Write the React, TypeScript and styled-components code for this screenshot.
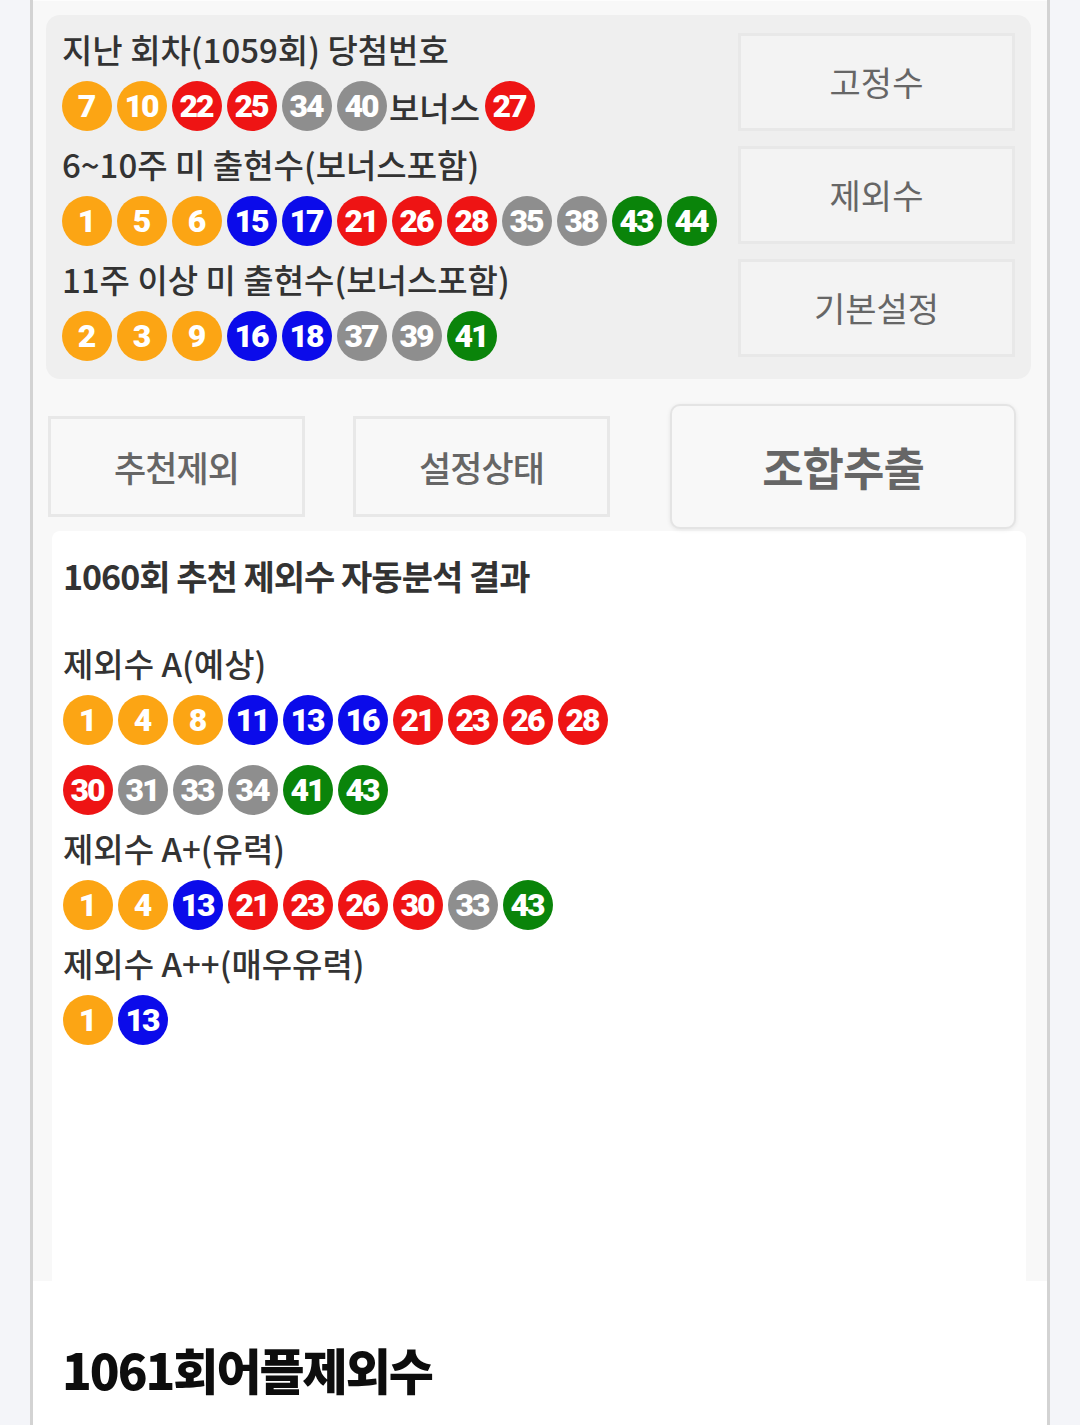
import React from 'react';
import styled, { createGlobalStyle } from 'styled-components';

const KR_FONT = `"Noto Sans CJK KR", "Noto Sans", sans-serif`;

const GlobalStyle = createGlobalStyle`
  body {
    margin: 0;
    background: #f4f5f9;
    font-family: ${KR_FONT};
  }
`;

const Page = styled.div`
  width: 1014px;
  min-height: 1425px;
  margin-left: 30px;
  border-left: 3px solid #d3d3d3;
  border-right: 3px solid #d3d3d3;
  background: #ffffff;
`;

const TopArea = styled.div`
  background: #f8f8f8;
  padding: 14px 16px 0 13px;
  border-top: 1px solid #fdfdfd;
`;

const Panel = styled.div`
  display: flex;
  justify-content: space-between;
  align-items: center;
  background: #efefef;
  border-radius: 14px;
  padding: 5px 16px 14px 16px;
`;

const InfoColumn = styled.div`
  display: flex;
  flex-direction: column;
`;

const Title = styled.div`
  font-size: 33px;
  font-weight: 500;
  line-height: 58px;
  color: #333;
`;

const BallRow = styled.div<{ $wrapWidth?: number }>`
  display: flex;
  flex-wrap: wrap;
  align-items: center;
  row-gap: 13px;
  max-width: ${(p) => (p.$wrapWidth ? `${p.$wrapWidth}px` : 'none')};
`;

const BALL_COLORS = ['#fca514', '#0b0bea', '#ee1414', '#8e8e8e', '#0a840a'];

const BallCircle = styled.span<{ $color: string }>`
  display: inline-flex;
  align-items: center;
  justify-content: center;
  width: 50px;
  height: 50px;
  margin: 3px 5px 4px 0;
  border-radius: 50%;
  background: ${(p) => p.$color};
  color: #fff;
  font-family: Roboto, "Liberation Sans", sans-serif;
  font-weight: 900;
  font-size: 32px;
  letter-spacing: -2px;
  text-indent: -2px;
`;

const BonusLabel = styled.span`
  font-size: 33px;
  font-weight: 500;
  color: #333;
  margin: 0 5px 0 -3px;
`;

const SideButtons = styled.div`
  display: flex;
  flex-direction: column;
  gap: 15px;
  padding-top: 4px;
`;

const SideButton = styled.button`
  width: 277px;
  height: 98px;
  background: #f3f3f3;
  border: 3px solid #e8e8e8;
  font-family: ${KR_FONT};
  font-size: 34px;
  color: #666;
  padding: 0;
`;

const ActionRow = styled.div`
  display: flex;
  align-items: center;
  padding: 25px 0 2px 2px;
`;

const ActionButton = styled.button<{ $big?: boolean; $gap: number }>`
  width: ${(p) => (p.$big ? 346 : 257)}px;
  height: ${(p) => (p.$big ? 125 : 101)}px;
  margin-left: ${(p) => p.$gap}px;
  background: #f8f8f8;
  border: ${(p) => (p.$big ? '2px solid #e4e4e4' : '3px solid #e8e8e8')};
  border-radius: ${(p) => (p.$big ? 10 : 0)}px;
  box-shadow: ${(p) => (p.$big ? '0 1px 4px rgba(0,0,0,0.08)' : 'none')};
  font-family: ${KR_FONT};
  font-size: ${(p) => (p.$big ? 45 : 35)}px;
  font-weight: ${(p) => (p.$big ? 700 : 500)};
  color: #666;
  letter-spacing: -1px;
  padding: 0;
`;

const ResultCard = styled.div`
  background: #ffffff;
  border-radius: 8px 8px 0 0;
  margin: 0 5px 0 6px;
  padding: 16px 11px 232px 11px;
`;

const CardTitle = styled.div`
  font-size: 34px;
  font-weight: 700;
  line-height: 58px;
  color: #333;
  letter-spacing: -1px;
  margin-bottom: 29px;
`;

const Heading = styled.h1`
  margin: 60px 0 0 29px;
  font-size: 49px;
  font-weight: 900;
  line-height: 56px;
  color: #0d0d0d;
  letter-spacing: -2px;
`;

const Ball = ({ n }: { n: number }) => (
  <BallCircle $color={BALL_COLORS[Math.min(4, Math.floor((n - 1) / 10))]}>{n}</BallCircle>
);

const Balls = ({ list, wrapWidth }: { list: number[]; wrapWidth?: number }) => (
  <BallRow $wrapWidth={wrapWidth}>
    {list.map((n) => (
      <Ball key={n} n={n} />
    ))}
  </BallRow>
);

const lastDraw = [7, 10, 22, 25, 34, 40];
const missing6to10 = [1, 5, 6, 15, 17, 21, 26, 28, 35, 38, 43, 44];
const missing11plus = [2, 3, 9, 16, 18, 37, 39, 41];

const excludeGroups = [
  { label: '제외수 A(예상)', list: [1, 4, 8, 11, 13, 16, 21, 23, 26, 28, 30, 31, 33, 34, 41, 43] },
  { label: '제외수 A+(유력)', list: [1, 4, 13, 21, 23, 26, 30, 33, 43] },
  { label: '제외수 A++(매우유력)', list: [1, 13] }
];

export default function App() {
  return (
    <Page>
      <GlobalStyle />
      <TopArea>
        <Panel>
          <InfoColumn>
            <Title>지난 회차(1059회) 당첨번호</Title>
            <BallRow>
              {lastDraw.map((n) => (
                <Ball key={n} n={n} />
              ))}
              <BonusLabel>보너스</BonusLabel>
              <Ball n={27} />
            </BallRow>
            <Title>6~10주 미 출현수(보너스포함)</Title>
            <Balls list={missing6to10} />
            <Title>11주 이상 미 출현수(보너스포함)</Title>
            <Balls list={missing11plus} />
          </InfoColumn>
          <SideButtons>
            <SideButton>고정수</SideButton>
            <SideButton>제외수</SideButton>
            <SideButton>기본설정</SideButton>
          </SideButtons>
        </Panel>

        <ActionRow>
          <ActionButton $gap={0}>추천제외</ActionButton>
          <ActionButton $gap={48}>설정상태</ActionButton>
          <ActionButton $gap={60} $big>
            조합추출
          </ActionButton>
        </ActionRow>

        <ResultCard>
          <CardTitle>1060회 추천 제외수 자동분석 결과</CardTitle>
          {excludeGroups.map((g) => (
            <div key={g.label}>
              <Title>{g.label}</Title>
              <Balls list={g.list} wrapWidth={560} />
            </div>
          ))}
        </ResultCard>
      </TopArea>

      <Heading>1061회어플제외수</Heading>
    </Page>
  );
}
